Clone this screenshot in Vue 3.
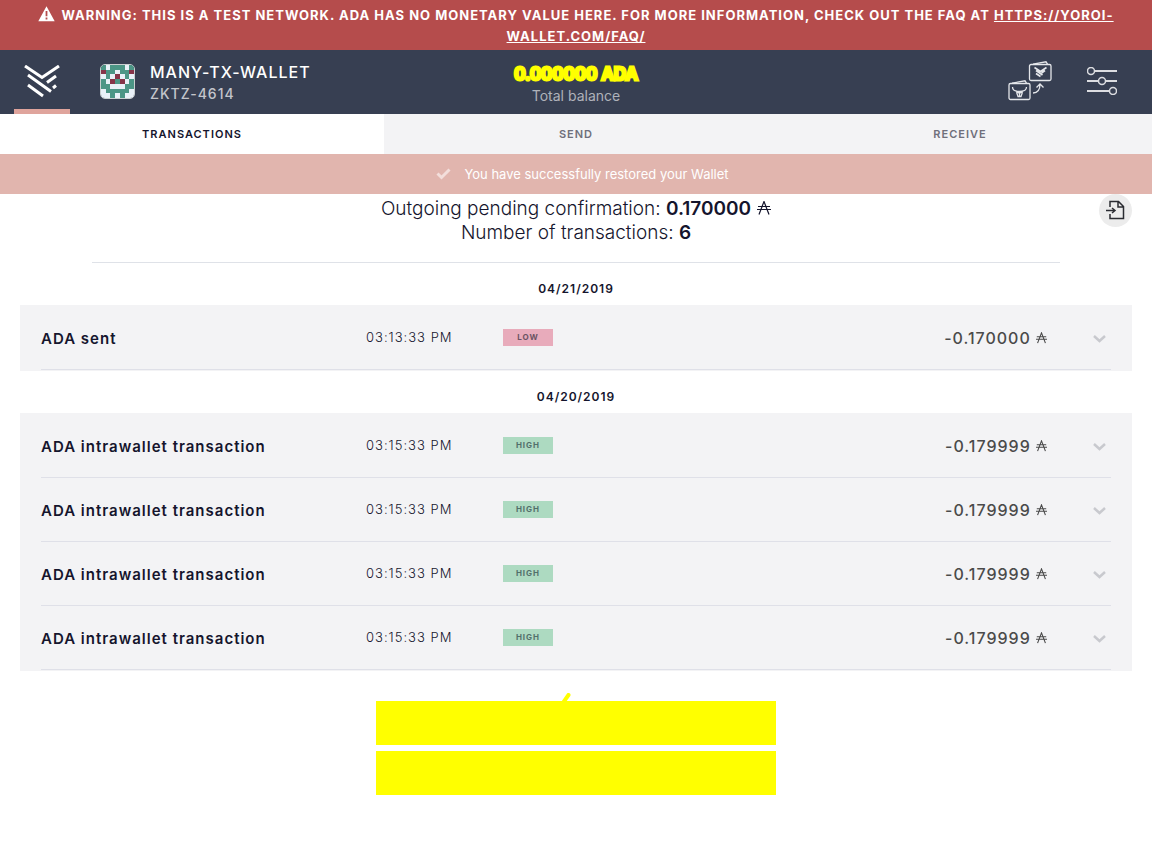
<script setup>
const identicon = [
  'gwgggwg',
  'rggwggr',
  'wgwrwgw',
  'gwrgrwg',
  'ggwwwgg',
  'wgggggw',
  'wwgwgww',
]
const fills = { w: '#e9f1f8', g: '#4c9686', r: '#863449' }
const groups = [
  { date: '04/21/2019', rows: [{ title: 'ADA sent', time: '03:13:33 PM', level: 'LOW', amount: '-0.170000' }] },
  {
    date: '04/20/2019',
    rows: Array.from({ length: 4 }, () => ({
      title: 'ADA intrawallet transaction', time: '03:15:33 PM', level: 'HIGH', amount: '-0.179999',
    })),
  },
]
</script>

<template>
  <div class="page">
    <div class="warning">
      <svg class="warn-icon" width="17" height="16" viewBox="0 0 17 16"><path fill="#fff" fill-rule="evenodd" d="M8.500.3 16.700 15.200H.3zM7.600 5v5.200h1.800V5zM7.600 11.500v2h1.800v-2z" /></svg>
      WARNING: THIS IS A TEST NETWORK. ADA HAS NO MONETARY VALUE HERE. FOR MORE INFORMATION, CHECK OUT THE FAQ AT
      <a href="#faq">HTTPS://YOROI-WALLET.COM/FAQ/</a>
    </div>

    <header class="topbar">
      <div class="left">
        <button class="logo" aria-label="Wallets">
          <svg width="36" height="33" viewBox="0 0 36 33" fill="none" stroke="#fff" stroke-width="3">
            <path d="M1 1 18 12.500 35 1M4 10l23 16.500M4 20l15 11M23 17.500l9-6.500M29 23l3-2.500" />
          </svg>
        </button>
        <svg class="identicon" width="35" height="35" viewBox="0 0 7 7" shape-rendering="crispEdges">
          <template v-for="(line, y) in identicon" :key="y">
            <rect v-for="(c, x) in line.split('')" :key="x" :x="x" :y="y" width="1" height="1" :fill="fills[c]" />
          </template>
        </svg>
        <div class="names">
          <div class="wallet-name">MANY-TX-WALLET</div>
          <div class="plate">ZKTZ-4614</div>
        </div>
      </div>
      <div class="balance">
        <div class="amount-total">0.000000 ADA</div>
        <div class="balance-label">Total balance</div>
      </div>
      <div class="actions">
        <button aria-label="Transfer wallet">
          <svg width="44" height="40" viewBox="0 0 44 40" fill="none" stroke="#e4e6ea" stroke-width="1.300">
            <rect x="21.500" y="3.500" width="21.500" height="16" rx="1.500" /><path d="M25 3.200 38 .8 39.500 3.200" />
            <rect x="1" y="22.500" width="21" height="16" rx="1.500" /><path d="M4 22.200 17 19.800l1.500 2.400" />
            <path d="M26.500 6.500l6 4 6-4M28 9.500l6.500 4.500M28 12.500l4.500 3M33.500 12l3.500-2.500" stroke-width="1.700" />
            <path d="M4.500 26c0 4 3.500 4.500 7 4.500s7-.5 7-4.500M8.500 31l1.500 4.500h3l1.500-4.500M11.500 30v5M7.500 29.500l4 3 4-3" />
            <path d="M25 32c5 0 7-3 7-9M28.500 26.500l3.500-3.500 3.500 3.500" />
          </svg>
        </button>
        <button aria-label="Settings">
          <svg width="30" height="28" viewBox="0 0 30 28" fill="none" stroke="#dcdde1" stroke-width="1.500">
            <path d="M8 4h22M0 14h11M19 14h11M0 24h22" stroke-width="2" />
            <circle cx="4" cy="4" r="3.500" /><circle cx="15" cy="14" r="3.500" /><circle cx="26" cy="24" r="3.500" />
          </svg>
        </button>
      </div>
    </header>

    <nav class="tabs">
      <button class="active">TRANSACTIONS</button>
      <button>SEND</button>
      <button>RECEIVE</button>
    </nav>

    <div class="notice">
      <svg width="15" height="12" viewBox="0 0 15 12" fill="none" stroke="#f3dedb" stroke-width="3"><path d="m1.500 5.500 4 4 8-8" /></svg>
      <span>You have successfully restored your Wallet</span>
    </div>

    <main>
      <section class="summary">
        <div class="summary-text">
          <div>Outgoing pending confirmation: <b>0.170000</b>
            <svg class="ada big" viewBox="0 0 14 14"><path d="M2 13.500 7 .5l5 13M1 5.500h12M0 8.500h14" /></svg>
          </div>
          <div>Number of transactions: <b>6</b></div>
        </div>
        <button class="export" aria-label="Export">
          <svg width="19" height="20" viewBox="0 0 19 20" fill="none" stroke="#2b2c32" stroke-width="1.500"><path d="M4 7V1.500h8.500L17.500 6.500v12H4V14M12 1.500V7h5.500M0 10.500h8M6 8l3 2.500L6 13" /></svg>
        </button>
      </section>

      <section v-for="group in groups" :key="group.date" class="group">
        <h2>{{ group.date }}</h2>
        <div class="card">
          <div v-for="(row, i) in group.rows" :key="i" class="row">
            <div class="title">{{ row.title }}</div>
            <div class="time">{{ row.time }}</div>
            <div class="badge" :class="row.level.toLowerCase()">{{ row.level }}</div>
            <div class="amount">{{ row.amount }}
              <svg class="ada" viewBox="0 0 14 14"><path d="M2 13.500 7 .5l5 13M1 5.500h12M0 8.500h14" /></svg>
            </div>
            <button class="expand" aria-label="Expand">
              <svg width="13" height="8" viewBox="0 0 13 8" fill="none" stroke="#c8c9ce" stroke-width="2.500"><path d="m1 1 5.500 5L12 1" /></svg>
            </button>
          </div>
        </div>
      </section>

      <div class="more">
        <svg class="spark" width="9" height="9" viewBox="0 0 9 9"><path d="M1.500 9 6.500 2" stroke="#ff0" stroke-width="4" stroke-linecap="round" /></svg>
        <div class="block"></div>
        <div class="block"></div>
      </div>
    </main>
  </div>
</template>

<style>
body { background: #fff; }
</style>

<style scoped>
.page { font-family: Inter, "Liberation Sans", sans-serif; color: #15152d; }
button { border: 0; background: none; padding: 0; font: inherit; color: inherit; display: flex; align-items: center; justify-content: center; }
svg { flex: none; }
.warning { background: #b54c4c; color: #fff; text-align: center; font-size: 13px; font-weight: 700; letter-spacing: 1px; line-height: 21px; padding: 5px 20px 3px; }
.warning a { color: inherit; }
.warn-icon { vertical-align: -2px; margin-right: 2px; }
.topbar { background: #373f52; height: 64px; display: grid; grid-template-columns: 1fr auto 1fr; align-items: center; }
.left { display: flex; align-items: center; align-self: stretch; padding-left: 14px; }
.logo { width: 56px; align-self: stretch; border-bottom: 5px solid #dfa49c; padding-top: 3px; }
.identicon { box-sizing: border-box; margin-left: 30px; border: 1px solid #c9cfd0; border-radius: 5px; margin-bottom: 1px; }
.names { margin-left: 15px; }
.wallet-name { font-size: 16px; font-weight: 500; letter-spacing: 1px; line-height: 24px; color: #fff; }
.plate { font-size: 14px; font-weight: 500; letter-spacing: 1px; line-height: 20px; color: #c3c5cb; }
.balance { text-align: center; padding-top: 3px; }
.amount-total { font-size: 17px; font-weight: 600; line-height: 24px; color: #ff0; -webkit-text-stroke: 3px #ff0; }
.balance-label { font-size: 14px; line-height: 20px; color: #afb2ba; }
.actions { display: flex; justify-content: flex-end; gap: 35px; padding: 0 35px 2px 0; }
.tabs { display: grid; grid-template-columns: repeat(3, 1fr); height: 40px; background: #f3f3f5; color: #6f6f7b; }
.tabs button { font-size: 11px; font-weight: 600; letter-spacing: 1px; }
.tabs .active { background: #fff; color: #15152d; }
.notice { background: #e1b5ae; color: #fff; height: 40px; display: flex; align-items: center; justify-content: center; gap: 13px; padding-left: 13px; font-size: 13px; }
main { padding: 0 20px; }
.summary { position: relative; margin: 0 72px; border-bottom: 1px solid #dfe2e8; padding: 3px 0 17px; text-align: center; }
.summary-text { font-size: 19px; font-weight: 300; line-height: 24px; }
.summary b { font-weight: 600; }
.export { position: absolute; top: 0; right: -72px; width: 33px; height: 33px; border-radius: 50%; background: #ececec; padding-bottom: 2px; }
.ada { width: 11px; height: 12px; fill: none; stroke: currentColor; stroke-width: 1.400; vertical-align: 0; }
.ada.big { width: 14px; height: 14px; stroke-width: 1.200; margin-left: 6px; }
h2 { margin: 0; padding-top: 16px; height: 26px; line-height: 20px; font-size: 12px; font-weight: 600; letter-spacing: 1px; text-align: center; }
.card { background: #f3f3f5; padding: 1px 21px; }
.row { display: grid; grid-template-columns: 325px 137px 50px 1fr 64px; align-items: center; height: 63px; border-bottom: 1px solid #dfe0e8; }
.title { font-size: 15px; font-weight: 600; letter-spacing: 1px; padding-top: 2px; }
.time { font-size: 13px; font-weight: 300; letter-spacing: 1px; padding-bottom: 2px; }
.badge { height: 17px; line-height: 17px; text-align: center; font-size: 8px; font-weight: 700; letter-spacing: 1px; color: #6b5363; }
.low { background: #e8abbb; }
.high { background: #addac1; color: #52706b; }
.amount { text-align: right; font-size: 16px; font-weight: 500; letter-spacing: 1px; color: #4a4a4a; }
.expand { justify-content: flex-end; padding: 3px 5px 0 0; }
.more { position: relative; width: 400px; max-width: 100%; margin: 30px auto 0; display: grid; gap: 6px; }
.block { height: 44px; background: #ff0; }
.spark { position: absolute; left: 186px; top: -8px; }
</style>
